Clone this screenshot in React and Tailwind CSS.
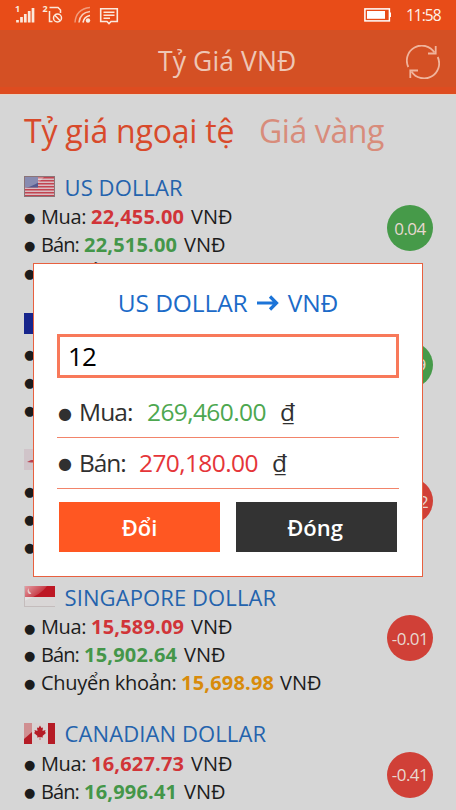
import React, { useState } from 'react';

const rates = [
  { id: 'us', name: 'US DOLLAR', buy: '22,455.00', sell: '22,515.00', transfer: '22,455.00', change: '0.04', up: true },
  { id: 'au', name: 'AUST.DOLLAR', buy: '16,802.54', sell: '17,089.26', transfer: '16,903.96', change: '0.09', up: true },
  { id: 'gb', name: 'BRITISH POUND', buy: '31,815.44', sell: '32,390.80', transfer: '32,039.71', change: '-0.12', up: false },
  { id: 'sg', name: 'SINGAPORE DOLLAR', buy: '15,589.09', sell: '15,902.64', transfer: '15,698.98', change: '-0.01', up: false },
  { id: 'ca', name: 'CANADIAN DOLLAR', buy: '16,627.73', sell: '16,996.41', change: '-0.41', up: false },
];

const Flag = ({ id }) => (
  <svg className="w-[31px] h-[21px] shrink-0" viewBox="0 0 31 21">
    <defs>
      <linearGradient id="gloss" x1="0" y1="0" x2="1" y2="0.7">
        <stop offset="0" stopColor="#fff" stopOpacity="0.6" />
        <stop offset="0.7" stopColor="#fff" stopOpacity="0.15" />
      </linearGradient>
    </defs>
    {id === 'us' && (
      <g>
        <rect width="31" height="21" fill="#d8bcc2" />
        {[1, 4, 7, 10, 13, 16, 19].map(y => (
          <rect key={y} x="0" y={y} width="31" height="1.5" fill="#c24450" />
        ))}
        <rect x="1" y="1" width="13" height="10.5" fill="#555a90" />
        <path d="M0 0H21Q13 10 0 12Z" fill="#fff" opacity="0.3" />
        <rect x="0.5" y="0.5" width="30" height="20" fill="none" stroke="#8b7478" />
      </g>
    )}
    {id === 'au' && <rect width="31" height="21" fill="#17258c" />}
    {id === 'gb' && (
      <g>
        <rect width="31" height="21" fill="#d0c4c9" />
        <path d="M3 13L7 11H10V13.500H7Z" fill="#b94350" />
      </g>
    )}
    {id === 'sg' && (
      <g>
        <rect width="31" height="21" fill="#d9d6d6" />
        <rect width="31" height="11" fill="#bd1724" />
        <path d="M0 0H23Q17 9 0 15Z" fill="url(#gloss)" />
        <path d="M5 2Q2 5 5 8Q8 8 7 7Q4 5 5 2Z" fill="#e6cdcd" />
        <path d="M0.5 0V21M0 20.5H31" stroke="#c4bcbc" fill="none" />
      </g>
    )}
    {id === 'ca' && (
      <g>
        <rect width="31" height="21" fill="#d8d2d2" />
        <rect width="8" height="21" fill="#b51c26" />
        <rect x="24" width="7" height="21" fill="#b51c26" />
        <path d="M0 0H8V9L0 16Z" fill="#d9b5b5" opacity="0.75" />
        <path d="M16 2.500L17.500 5L19 4.500L18.500 8L21.500 7L21 9L22 10L18.500 13L19 14.500L16.300 14V17H15.700V14L13 14.500L13.500 13L10 10L11 9L10.500 7L13.500 8L13 4.500L14.500 5Z" fill="#b51c26" />
      </g>
    )}
  </svg>
);

const Line = ({ label, labelClass, value, valueClass }) => (
  <div className="flex items-center h-[27.9px] text-[20px] leading-none text-[#1c1c1c] whitespace-nowrap">
    <span className="w-[17px] shrink-0 font-['DejaVu_Sans'] text-[13px] pt-[2px]">●</span>
    <span className={labelClass}>{label}</span>
    <span className={valueClass}>{value}</span>
    <span className="tracking-[0px]">VNĐ</span>
  </div>
);

const RateItem = ({ rate }) => (
  <div className="h-[136.7px] shrink-0 flex justify-between">
    <div>
      <div className="flex items-center h-[31px] pb-[2px]">
        <Flag id={rate.id} />
        <span className="ml-[9.5px] text-[22px] leading-none text-[#2463ad] tracking-[0.1px]">{rate.name}</span>
      </div>
      <Line label="Mua:" value={rate.buy} labelClass="w-[50px] tracking-[-0.4px]" valueClass="w-[100px] font-bold text-[#d13438] tracking-[0.2px]" />
      <Line label="Bán:" value={rate.sell} labelClass="w-[43px] tracking-[-0.9px]" valueClass="w-[100px] font-bold text-[#449649] tracking-[0.2px]" />
      {rate.transfer && (
        <Line label="Chuyển khoản:" value={rate.transfer} labelClass="w-[140px] tracking-[-0.3px]" valueClass="w-[99px] font-bold text-[#d88b0b] tracking-[0.2px]" />
      )}
    </div>
    <div
      className={`mt-[33px] w-[46px] h-[46px] rounded-full flex items-center justify-center text-[17px] leading-none text-[#e8d8d0] tracking-[-0.5px] ${
        rate.up ? 'bg-[#469a49]' : 'bg-[#d04037]'
      }`}
    >
      {rate.change}
    </div>
  </div>
);

const StatusBar = () => (
  <div className="h-[30px] bg-[#e84c18] flex items-center justify-between pl-[15px] pr-[16px] shrink-0">
    <svg className="w-[106px] h-[28px]" viewBox="15 1 106 28" fill="none" stroke="#fbe9dc" strokeWidth="1.3">
      <text x="15" y="11.500" fontSize="9" fontWeight="700" fill="#fbe9dc" stroke="none">1</text>
      <path d="M17.500 22.500V20M21.500 22.500V17M25.300 22.500V14M29.200 22.500V11M33 22.500V8" strokeWidth="2.700" />
      <text x="42.500" y="11.500" fontSize="9" fontWeight="700" fill="#fbe9dc" stroke="none">2</text>
      <path d="M49.500 7.500H58L60.500 10V13M49.500 11V21.500H52.500" strokeWidth="1.500" />
      <circle cx="57.500" cy="18" r="4" strokeWidth="1.500" />
      <path d="M54.800 15.300L60.200 20.700" strokeWidth="1.500" />
      <path d="M75 22.500Q76 9 90 7.500" strokeWidth="1.500" opacity="0.5" />
      <path d="M79 22.500Q80 12.500 90 11.500" strokeWidth="1.600" opacity="0.8" />
      <path d="M83 22.500Q84 16.500 90 15.500" strokeWidth="1.600" />
      <circle cx="88" cy="20.500" r="2.200" fill="#fbe9dc" stroke="none" />
      <path d="M100.700 8.700H117.300V21.500H111L109 23.500L107 21.500H100.700ZM103.500 12.300H114.500M103.500 15.300H114.500M103.500 18.300H110" strokeWidth="1.600" />
    </svg>
    <div className="flex items-center">
      <svg className="w-[28px] h-[14px]" viewBox="0 0 28 14">
        <rect x="0.900" y="0.900" width="24.500" height="12" fill="none" stroke="#fff" strokeWidth="1.500" />
        <rect x="3" y="3" width="18" height="7.800" fill="#fff" />
        <rect x="25.500" y="4.500" width="1.500" height="4.500" fill="#fff" />
      </svg>
      <span className="ml-[14px] w-[34px] pt-px text-[15.5px] leading-none text-[#fff3ea] tracking-[-1px]">11:58</span>
    </div>
  </div>
);

const ConvertDialog = ({ onClose }) => {
  const [amount, setAmount] = useState('12');

  return (
    <div className="absolute left-[33px] top-[263px] w-[390px] h-[314px] bg-white border border-[#e8603f] px-[23px] flex flex-col">
      <h2 className="mt-[23px] h-[32px] flex items-center justify-center text-[24.5px] leading-none text-[#1c6bc8] whitespace-nowrap">
        <span className="tracking-[-0.1px]">US DOLLAR</span>
        <svg className="w-[23px] h-[18px] mx-[8.5px]" viewBox="0 0 23 18" fill="none" stroke="#1c74d8" strokeWidth="3.200">
          <path d="M1 9H20.500M14 2.500L20.500 9L14 15.500" />
        </svg>
        <span className="tracking-[-0.1px]">VNĐ</span>
      </h2>
      <input
        value={amount}
        onChange={e => setAmount(e.target.value)}
        className="mt-[15px] w-[342px] h-[44px] border-[3px] border-[#f8795a] pl-[8px] text-[26px] leading-none text-black outline-none tracking-[-0.8px]"
      />
      <div className="h-[60px] w-[342px] pt-[10px] border-b border-[#f2846a] flex items-center text-[24.5px] leading-none text-[#303030]">
        <span className="w-[22px] font-['DejaVu_Sans'] text-[16px] pl-px pt-[2px]">●</span>
        <span className="w-[68px] tracking-[-0.9px]">Mua:</span>
        <span className="w-[133px] text-[#4da750] tracking-[-0.6px]">269,460.00</span>
        <span>₫</span>
      </div>
      <div className="h-[51px] w-[342px] border-b border-[#f2846a] flex items-center text-[24.5px] leading-none text-[#303030]">
        <span className="w-[22px] font-['DejaVu_Sans'] text-[16px] pl-px pt-[2px]">●</span>
        <span className="w-[60px] tracking-[-1.1px]">Bán:</span>
        <span className="w-[133px] text-[#e53539] tracking-[-0.6px]">270,180.00</span>
        <span>₫</span>
      </div>
      <div className="mt-[13px] ml-[2px] flex gap-4 text-[22px] leading-none font-semibold text-white">
        <button className="w-[161px] h-[50px] bg-[#ff5722]">Đổi</button>
        <button onClick={onClose} className="w-[161px] h-[50px] bg-[#333333] pr-[3px]">Đóng</button>
      </div>
    </div>
  );
};

export default function App() {
  const [open, setOpen] = useState(true);

  return (
    <div className="relative w-[456px] h-[810px] overflow-hidden bg-[#d6d6d6] font-['Open_Sans','Noto_Sans',sans-serif] flex flex-col">
      <StatusBar />
      <header className="h-[64px] shrink-0 bg-[#d45024] border-b-[7px] border-[#de4c20] flex items-center justify-between pr-[16px] pl-[158px]">
        <h1 className="text-[26.5px] leading-none text-[#eec6b5] tracking-[0.1px] pt-[5px] whitespace-nowrap">Tỷ Giá VNĐ</h1>
        <svg className="w-[34px] h-[34px] mt-[7px]" viewBox="0 0 34 34" fill="none" stroke="#f0b49c" strokeWidth="1.800">
          <path d="M2.300 22A15 15 0 0 1 28.500 7.500M31.700 12A15 15 0 0 1 5.500 26.500" />
          <path d="M29.700 1V8.500H22M4.300 33V25.500H12" />
        </svg>
      </header>
      <nav className="h-[78px] shrink-0 border-t border-[#e6d2c4] pl-[24px] pt-[19px] flex items-start text-[32px] leading-[34px] whitespace-nowrap">
        <span className="w-[235px] text-[#d84a2b] tracking-[-0.2px]">Tỷ giá ngoại tệ</span>
        <span className="text-[#d88c7b] tracking-[-0.4px]">Giá vàng</span>
      </nav>
      <main className="pl-[24px] pr-[23px] flex flex-col">
        {rates.map(rate => (
          <RateItem key={rate.id} rate={rate} />
        ))}
      </main>
      {open && <ConvertDialog onClose={() => setOpen(false)} />}
    </div>
  );
}
